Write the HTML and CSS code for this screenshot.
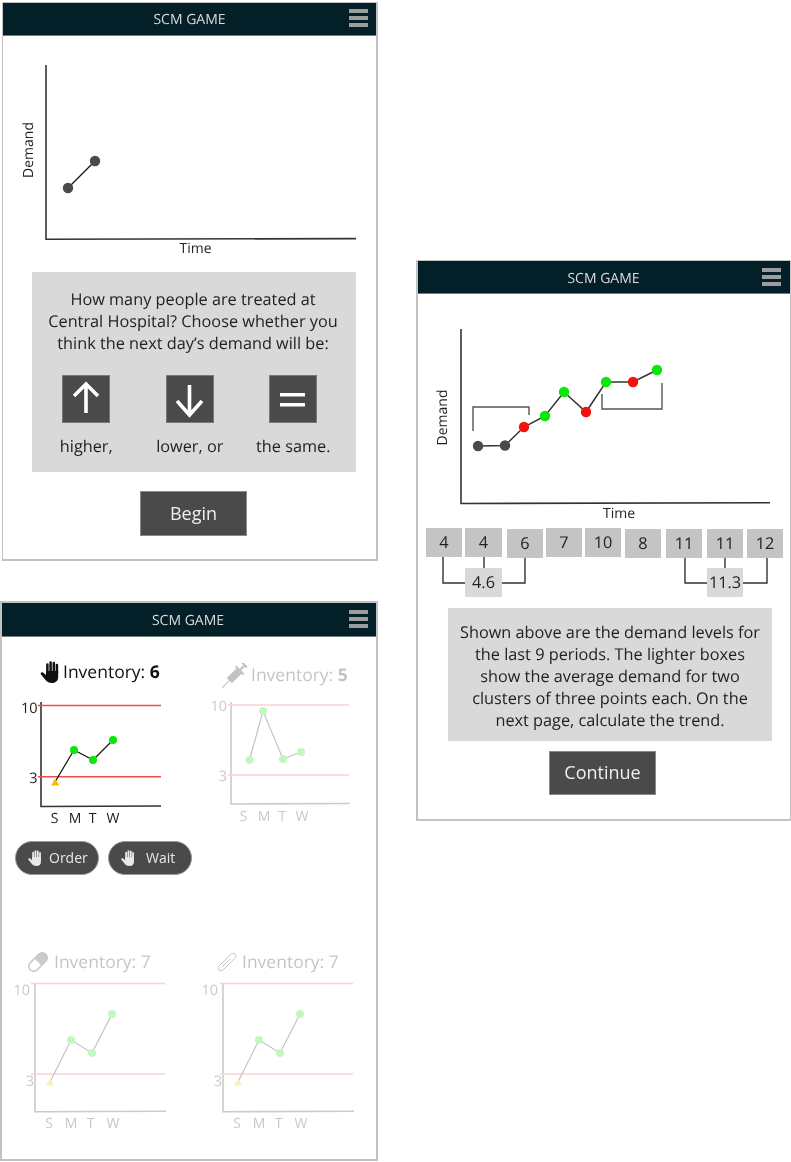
FILE: index.html
```html
<!DOCTYPE html>
<html lang="en">
<head>
<meta charset="utf-8">
<title>SCM Game</title>
<link rel="stylesheet" href="styles.css">
</head>
<body>
<svg class="defs" width="0" height="0" aria-hidden="true">
  <symbol id="hand" viewBox="0 0 20 22">
    <path d="M6 10 L6 14 L3 11.5 C1.5 10.5 0 12 1 13.5 L5.5 19 C7 21 9 22 12 22 C16 22 18.2 19.5 18.2 16 V10 Z" fill="currentColor"/>
    <g stroke="currentColor" stroke-width="2.5" stroke-linecap="round">
      <path d="M7.4 3.5V12M10.6 1.5V12M13.8 2V12M16.9 4V12"/>
    </g>
  </symbol>
</svg>
<main class="desktop">

  <section class="window win-begin">
    <header class="bar">
      <span class="bar-title">SCM GAME</span>
      <span class="burger"><i></i><i></i><i></i></span>
    </header>
    <svg class="chart" width="374" height="230" viewBox="3 36 374 230">
      <path class="axis" d="M46 65V239.3L356 238.6"/>
      <text class="lbl" x="33" y="150" text-anchor="middle" transform="rotate(-90 33 150)">Demand</text>
      <text class="lbl" x="195.500" y="253" text-anchor="middle">Time</text>
      <path class="trace" d="M68 188L95 161"/>
      <circle class="dot-grey" cx="68" cy="188" r="5.200"/>
      <circle class="dot-grey" cx="95" cy="161" r="5.200"/>
    </svg>
    <div class="panel panel-begin">
      <p class="panel-text">How many people are treated at<br>Central Hospital? Choose whether you<br>think the next day’s demand will be:</p>
      <div class="choices">
        <div class="choice">
          <span class="square">
            <svg width="48" height="48" viewBox="0 0 48 48"><path class="glyph" d="M24 9V38M12 21L24 9L36 21"/></svg>
          </span>
          <span class="choice-label">higher,</span>
        </div>
        <div class="choice">
          <span class="square">
            <svg width="48" height="48" viewBox="0 0 48 48"><path class="glyph" d="M23.500 10V40M11 26L23.500 40L36 26"/></svg>
          </span>
          <span class="choice-label">lower, or</span>
        </div>
        <div class="choice">
          <span class="square">
            <svg width="48" height="48" viewBox="0 0 48 48"><path class="glyph" d="M11 19.800H36M11 29.800H36"/></svg>
          </span>
          <span class="choice-label">the same.</span>
        </div>
      </div>
    </div>
    <button class="btn btn-begin" type="button">Begin</button>
  </section>

  <section class="window win-trend">
    <header class="bar">
      <span class="bar-title">SCM GAME</span>
      <span class="burger"><i></i><i></i><i></i></span>
    </header>
    <svg class="chart" width="372" height="228" viewBox="418 294 372 228">
      <path class="axis" d="M461 329V503.500L770 502.800"/>
      <text class="lbl" x="447" y="417.500" text-anchor="middle" transform="rotate(-90 447 417.500)">Demand</text>
      <text class="lbl" x="619" y="517.500" text-anchor="middle">Time</text>
      <path class="bracket" d="M473 431V407H529V415M602 394V409H662V383"/>
      <path class="trace-wide" d="M478 446L505 445.500L524 427L545 416L564 392L586 412L606 382L633 382L657 370"/>
      <circle class="dot-grey" cx="478" cy="446" r="5.200"/>
      <circle class="dot-grey" cx="505" cy="445.500" r="5.200"/>
      <circle class="dot-red" cx="524" cy="427" r="5.200"/>
      <circle class="dot-green" cx="545" cy="416" r="5.200"/>
      <circle class="dot-green" cx="564" cy="392" r="5.200"/>
      <circle class="dot-red" cx="586" cy="412" r="5.200"/>
      <circle class="dot-green" cx="606" cy="382" r="5.200"/>
      <circle class="dot-red" cx="633" cy="382" r="5.200"/>
      <circle class="dot-green" cx="657" cy="370" r="5.200"/>
    </svg>
    <div class="numbers">
      <svg class="links" width="372" height="80" viewBox="418 522 372 80">
        <path class="link" d="M443 557V583H465M502 583H525V557M484 557V568M685 558V583H707M743 583H767V558M725 558V568"/>
      </svg>
      <div class="num-row">
        <span class="num num-first">4</span>
        <span class="num gap3 wide">4</span>
        <span class="num gap5 drop">6</span>
        <span class="num gap3">7</span>
        <span class="num gap3">10</span>
        <span class="num gap4 drop">8</span>
        <span class="num gap5 drop">11</span>
        <span class="num gap5 drop">11</span>
        <span class="num gap4 drop">12</span>
      </div>
      <div class="avg-row">
        <span class="avg avg-a">4.6</span>
        <span class="avg avg-b">11.3</span>
      </div>
    </div>
    <div class="panel panel-trend">
      <p class="panel-text">Shown above are the demand levels for<br>the last 9 periods. The lighter boxes<br>show the average demand for two<br>clusters of three points each. On the<br>next page, calculate the trend.</p>
    </div>
    <button class="btn btn-continue" type="button">Continue</button>
  </section>

  <section class="window win-stock">
    <header class="bar">
      <span class="bar-title">SCM GAME</span>
      <span class="burger"><i></i><i></i><i></i></span>
    </header>
    <div class="stock-grid">

      <article class="cell cell-a">
        <h2 class="inv">
          <svg class="inv-icon" width="20" height="22"><use href="#hand"/></svg>
          <span>Inventory: <b>6</b></span>
        </h2>
        <svg class="chart" width="196" height="140" viewBox="2 687 196 140">
          <path class="axis" d="M41 702V806.500L161 806"/>
          <path class="limit" d="M38 705.500H161M38 776.700H161"/>
          <text class="tick" x="37.500" y="713" text-anchor="end">10</text>
          <text class="tick" x="37.500" y="783" text-anchor="end">3</text>
          <path class="trace" d="M55 782L74 750L93 760L113 740"/>
          <path class="warn" d="M51 785.500L55 778.500L59.500 785.500Z"/>
          <circle class="dot-green dot-s" cx="74" cy="750"/>
          <circle class="dot-green dot-s" cx="93" cy="760"/>
          <circle class="dot-green dot-s" cx="113" cy="740"/>
          <text class="day" x="54.500" y="823" text-anchor="middle">S</text>
          <text class="day" x="75" y="823" text-anchor="middle">M</text>
          <text class="day" x="92.500" y="823" text-anchor="middle">T</text>
          <text class="day" x="113" y="823" text-anchor="middle">W</text>
        </svg>
        <div class="pills">
          <button class="pill" type="button">
            <svg width="16" height="16"><use href="#hand"/></svg>
            <span>Order</span>
          </button>
          <button class="pill pill-wait" type="button">
            <svg width="16" height="16"><use href="#hand"/></svg>
            <span>Wait</span>
          </button>
        </div>
      </article>

      <article class="cell cell-b faded">
        <h2 class="inv">
          <svg class="inv-icon" width="25" height="25" viewBox="0 0 24 24">
            <g class="syringe" transform="rotate(45 12 12)">
              <rect x="8.500" y="5" width="7" height="14"/>
              <rect x="6.500" y="4" width="11" height="2"/>
              <rect x="11" y="-2" width="2" height="7"/>
              <rect x="8" y="-3" width="8" height="2"/>
              <rect x="11.500" y="19" width="1" height="11"/>
            </g>
          </svg>
          <span>Inventory: <b>5</b></span>
        </h2>
        <svg class="chart" width="178" height="135" viewBox="198 690 178 135">
          <path class="axis" d="M231 702V804L350 803.500"/>
          <path class="limit" d="M228 705H349M228 775H349"/>
          <text class="tick" x="227" y="711" text-anchor="end">10</text>
          <text class="tick" x="227" y="781" text-anchor="end">3</text>
          <path class="trace" d="M249.500 760L263 711L283 759L301 752"/>
          <circle class="dot-green dot-s" cx="249.500" cy="760"/>
          <circle class="dot-green dot-s" cx="263" cy="711"/>
          <circle class="dot-green dot-s" cx="283" cy="759"/>
          <circle class="dot-green dot-s" cx="301" cy="752"/>
          <text class="day" x="243.500" y="821" text-anchor="middle">S</text>
          <text class="day" x="264" y="821" text-anchor="middle">M</text>
          <text class="day" x="282" y="821" text-anchor="middle">T</text>
          <text class="day" x="302" y="821" text-anchor="middle">W</text>
        </svg>
      </article>

      <article class="cell cell-c faded">
        <h2 class="inv">
          <svg class="inv-icon" width="20" height="20" viewBox="0 0 20 20">
            <g transform="rotate(-45 10 10)">
              <rect class="pill-shell" x="-1" y="5" width="22" height="10" rx="5"/>
              <path class="pill-half" d="M10 5H16A5 5 0 0 1 16 15H10Z"/>
            </g>
          </svg>
          <span>Inventory: 7</span>
        </h2>
        <svg class="chart" width="196" height="160" viewBox="2 977 196 160">
          <path class="axis" d="M35 983V1111.700L166 1111.300"/>
          <path class="limit" d="M31 983.500H165M31 1074H165"/>
          <text class="tick" x="30" y="995" text-anchor="end">10</text>
          <text class="tick" x="34" y="1086" text-anchor="end">3</text>
          <path class="trace" d="M50 1082L71 1040L92 1053L112 1014"/>
          <path class="warn" d="M46 1085.500L50 1078.500L54.500 1085.500Z"/>
          <circle class="dot-green dot-s" cx="71" cy="1040"/>
          <circle class="dot-green dot-s" cx="92" cy="1053"/>
          <circle class="dot-green dot-s" cx="112" cy="1014"/>
          <text class="day" x="49" y="1128" text-anchor="middle">S</text>
          <text class="day" x="71" y="1128" text-anchor="middle">M</text>
          <text class="day" x="90.500" y="1128" text-anchor="middle">T</text>
          <text class="day" x="113" y="1128" text-anchor="middle">W</text>
        </svg>
      </article>

      <article class="cell cell-d faded">
        <h2 class="inv">
          <svg class="inv-icon" width="20" height="20" viewBox="0 0 20 20">
            <path class="clip" d="M2 18C1 16.500 1 15 3 13L14 2.200C16 .5 19 1.500 19 4C19 5 18.300 6 17 7.200L7 17C5 19 3 19 2 18ZM5 15L13 7"/>
          </svg>
          <span>Inventory: 7</span>
        </h2>
        <svg class="chart" width="178" height="160" viewBox="198 977 178 160">
          <path class="axis" d="M223 983V1111.700L354 1111.300"/>
          <path class="limit" d="M220 983.500H353M220 1074H353"/>
          <text class="tick" x="218" y="995" text-anchor="end">10</text>
          <text class="tick" x="222" y="1086" text-anchor="end">3</text>
          <path class="trace" d="M238 1082L259 1040L280 1053L300 1014"/>
          <path class="warn" d="M234 1085.500L238 1078.500L242.500 1085.500Z"/>
          <circle class="dot-green dot-s" cx="259" cy="1040"/>
          <circle class="dot-green dot-s" cx="280" cy="1053"/>
          <circle class="dot-green dot-s" cx="300" cy="1014"/>
          <text class="day" x="237" y="1128" text-anchor="middle">S</text>
          <text class="day" x="259" y="1128" text-anchor="middle">M</text>
          <text class="day" x="278.500" y="1128" text-anchor="middle">T</text>
          <text class="day" x="301" y="1128" text-anchor="middle">W</text>
        </svg>
      </article>
    </div>
  </section>
</main>
</body>
</html>
```

FILE: styles.css
```css
* { box-sizing: border-box; }

html, body {
  margin: 0;
  padding: 0;
  background: #fff;
}

body {
  font-family: "Open Sans", "Noto Sans", sans-serif;
  color: #222;
  text-rendering: geometricPrecision;
}

.defs { position: absolute; }

.desktop {
  position: relative;
  width: 791px;
  height: 1162px;
  overflow: hidden;
  filter: blur(0.35px);
}

/* windows on the canvas */
.window {
  position: absolute;
  background: #fff;
  border-style: solid;
  border-color: #c2c2c2;
}

.win-begin {
  left: 2px;
  top: 2px;
  width: 376px;
  height: 559px;
  border-width: 1px 2px 2px 1px;
}

.win-trend {
  left: 416px;
  top: 260px;
  width: 375px;
  height: 561px;
  border-width: 1px 1px 2px 2px;
}

.win-stock {
  left: 0;
  top: 601px;
  width: 378px;
  height: 560px;
  border-width: 2px;
}

/* title bar */
.bar {
  display: grid;
  grid-template-columns: 1fr auto 1fr;
  height: 33px;
  background: #031f28;
  border-bottom: 1px solid #6f7c80;
}

.win-stock .bar { height: 34px; }

.bar-title {
  grid-column: 2;
  align-self: center;
  margin-top: 2px;
  font-size: 14px;
  line-height: 20px;
  color: #dcdcdc;
}

.win-trend .bar-title { margin-top: 4px; margin-left: -1px; }

.burger {
  grid-column: 3;
  justify-self: end;
  display: flex;
  flex-direction: column;
  gap: 3px;
  width: 19px;
  margin: 6px 8px 0 0;
}

.win-trend .burger { margin-right: 9px; margin-top: 7px; }
.win-stock .burger { margin-right: 8px; margin-top: 7px; }
.win-stock .bar-title { margin-left: -2px; }

.burger i {
  display: block;
  height: 4px;
  background: #9c9c9c;
}

/* charts */
.chart { display: block; }

.axis {
  fill: none;
  stroke: #333;
  stroke-width: 1.6;
}

.lbl {
  font-size: 14px;
  fill: #222;
}

.tick {
  font-size: 14.5px;
  fill: #222;
}

.day {
  font-size: 14px;
  fill: #222;
}

.trace {
  fill: none;
  stroke: #111;
  stroke-width: 1.2;
}

.trace-wide {
  fill: none;
  stroke: #333;
  stroke-width: 1.5;
}

.bracket {
  fill: none;
  stroke: #555;
  stroke-width: 1.4;
}

.limit {
  fill: none;
  stroke: #f04a4a;
  stroke-width: 1.5;
}

.warn { fill: #f2c200; }
.dot-grey { fill: #4a4a4a; }
.dot-red { fill: #f50f0f; }
.dot-green { fill: #0be60b; }
.dot-s { r: 4px; }

/* grey instruction panels */
.panel {
  background: #d9d9d9;
  font-size: 16.3px;
  line-height: 22px;
  text-align: center;
}

.panel-text { margin: 0; }

.panel-begin {
  width: 324px;
  height: 200px;
  margin: 6px 0 0 29px;
  padding-top: 16px;
}

.panel-begin .panel-text { padding-right: 2px; }

.choices {
  display: grid;
  grid-template-columns: repeat(3, 103.5px);
  margin: 21px 0 0 2.5px;
}

.choice {
  display: flex;
  flex-direction: column;
  align-items: center;
  gap: 12px;
}

.square {
  display: block;
  width: 48px;
  height: 48px;
  background: #4a4a4a;
  outline: 1px solid #777;
  outline-offset: -1px;
}

.square svg { display: block; }

.glyph {
  fill: none;
  stroke: #fff;
  stroke-width: 3.6;
}

.panel-trend {
  width: 324px;
  height: 133px;
  margin: 11px 0 0 30px;
  padding-top: 13px;
}

/* buttons */
.btn {
  display: block;
  background: #4a4a4a;
  border: 1px solid #8a8a8a;
  color: #efefef;
  font: 18px/24px "Open Sans", sans-serif;
  padding: 0 0 2px;
}

.btn-begin {
  width: 107px;
  height: 45px;
  margin: 19px 0 0 137px;
}

.btn-continue {
  width: 107px;
  height: 44px;
  margin: 10px 0 0 131px;
}

/* demand numbers */
.numbers {
  position: relative;
  height: 75px;
  padding-top: 6px;
}

.links {
  position: absolute;
  left: 0;
  top: 0;
}

.link {
  fill: none;
  stroke: #333;
  stroke-width: 1.4;
}

.num-row {
  position: relative;
  display: flex;
  align-items: flex-start;
  padding-left: 8px;
  height: 40px;
}

.num {
  width: 36px;
  height: 29px;
  background: #c4c4c4;
  font-size: 16.3px;
  line-height: 29px;
  text-align: center;
}

.wide { width: 37px; }
.drop { margin-top: 1px; }
.gap3 { margin-left: 3px; }
.gap4 { margin-left: 4px; }
.gap5 { margin-left: 5px; }

.avg-row {
  position: relative;
  display: flex;
  margin-top: 0;
}

.avg {
  height: 29px;
  background: #d9d9d9;
  font-size: 16.3px;
  line-height: 29px;
  text-align: center;
}

.avg-a { width: 37px; margin-left: 47px; }
.avg-b { width: 36px; margin-left: 205px; }

/* inventory grid */
.stock-grid {
  display: grid;
  grid-template-columns: 196px 178px;
  grid-template-rows: 308px auto;
}

.faded { opacity: 0.25; }

.inv {
  display: flex;
  align-items: center;
  height: 30px;
  margin: 0;
  font-size: 17.5px;
  font-weight: 400;
  line-height: 24px;
  color: #111;
  white-space: pre;
}

.inv b { font-weight: 700; }
.inv-icon { flex: none; }

.cell-a .inv { margin-top: 20px; padding-left: 38px; gap: 3px; }
.cell-b .inv { margin-top: 23px; padding-left: 24px; gap: 4px; }
.cell-c .inv { margin-top: 2px; padding-left: 26px; gap: 6px; }
.cell-d .inv { margin-top: 2px; padding-left: 19px; gap: 5px; }

.syringe { fill: #111; }

.pill-shell {
  fill: #fff;
  stroke: #111;
  stroke-width: 1.4;
}

.pill-half { fill: #333; }

.clip {
  fill: none;
  stroke: #111;
  stroke-width: 1;
}

/* order / wait */
.pills {
  display: flex;
  gap: 9px;
  margin: 14px 0 0 13px;
}

.pill {
  display: flex;
  align-items: center;
  gap: 6px;
  width: 84px;
  height: 34px;
  padding: 0 0 0 11px;
  background: #4a4a4a;
  border: 1px solid #999;
  border-radius: 17px;
  color: #e8e8e8;
  font: 14px/20px "Open Sans", sans-serif;
}

.pill-wait { gap: 10px; }
```
